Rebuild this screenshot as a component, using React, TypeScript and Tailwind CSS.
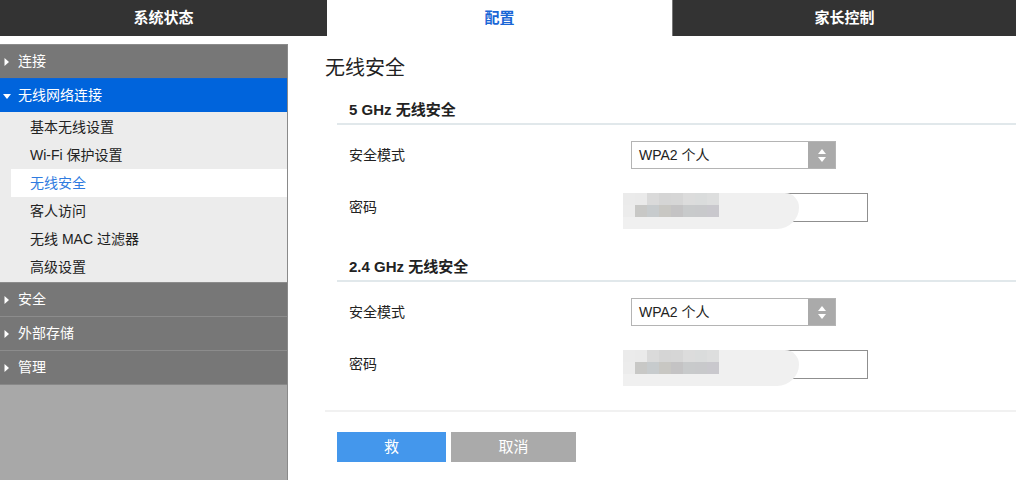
import { useState } from 'react';

const font = { fontFamily: '"Liberation Sans", "Noto Sans CJK SC", sans-serif' };

const tabs = [
  { label: '系统状态', width: 'w-[327px]' },
  { label: '配置', width: 'w-[345px]' },
  { label: '家长控制', width: 'flex-1' },
];

const wirelessItems = ['基本无线设置', 'Wi-Fi 保护设置', '无线安全', '客人访问', '无线 MAC 过滤器', '高级设置'];

const mosaicTop = ['#ebebeb', '#eaeaea', '#dadada', '#d5d5d5', '#d6d6d6', '#dcdcdc', '#dadcdc', '#dddede'];
const mosaicMid = ['#ececec', '#c8c8c6', '#c7cbcd', '#c8c7c3', '#c4c3c4', '#c8cacb', '#c8c9cb', '#c9c8cd'];

const Caret = ({ open }: { open?: boolean }) => (
  <svg width="8" height="8" viewBox="0 0 8 8" className="shrink-0">
    {open ? <path d="M0 2h8L4 7z" fill="#fff" /> : <path d="M1.5 0v8L6 4z" fill="#fff" />}
  </svg>
);

const SideHeader = ({ label, open, active }: { label: string; open?: boolean; active?: boolean }) => (
  <div
    className={`flex h-[34px] items-center gap-[7px] border-t pl-[3px] text-[14px] text-white ${
      active ? 'border-[#0a64d8] bg-[#0064dc]' : 'border-[#8c8c8c] bg-[#777777]'
    }`}
  >
    <Caret open={open} />
    <span>{label}</span>
  </div>
);

const Select = ({ value }: { value: string }) => (
  <div className="flex h-[28px] w-[205px] border border-[#b4b4b4] bg-white">
    <span className="flex flex-1 items-center pl-[7px] text-[14px] text-[#222]">{value}</span>
    <span className="flex w-[27px] flex-col items-center justify-center gap-[3px] bg-[#aaaaaa]">
      <svg width="8" height="5" viewBox="0 0 8 5">
        <path d="M0 5h8L4 0z" fill="#fff" />
      </svg>
      <svg width="8" height="5" viewBox="0 0 8 5">
        <path d="M0 0h8L4 5z" fill="#fff" />
      </svg>
    </span>
  </div>
);

// the password is hidden under a pixelated smudge in the screenshot
const MaskedInput = () => (
  <div className="relative h-[29px] w-[237px] border border-[#8f8f8f] bg-white">
    <div className="absolute top-[-1px] left-[-9px] h-[36px] w-[176px] rounded-r-[26px] rounded-br-[40px] bg-[#f0f0f0]">
      <div className="flex h-[12px]">
        {mosaicTop.map((c, i) => (
          <span key={i} className="h-full w-[12px]" style={{ background: c }} />
        ))}
      </div>
      <div className="flex h-[12px]">
        {mosaicMid.map((c, i) => (
          <span key={i} className="h-full w-[12px]" style={{ background: c }} />
        ))}
      </div>
    </div>
  </div>
);

const Row = ({ label, children }: { label: string; children: React.ReactNode }) => (
  <div className="flex h-[52px] items-center pl-[12px]">
    <span className="w-[282px] text-[14px] text-[#222]">{label}</span>
    {children}
  </div>
);

const Section = ({ title, first }: { title: string; first?: boolean }) => (
  <div className={first ? 'mt-[14px]' : 'mt-[20px]'}>
    <div className="h-[29px] border-b-2 border-[#e1e8eb] pl-[12px] text-[15px] leading-[28px] font-bold text-[#222]">
      {title}
    </div>
    <div className="mt-[4px]">
      <Row label="安全模式">
        <Select value="WPA2 个人" />
      </Row>
      <Row label="密码">
        <MaskedInput />
      </Row>
    </div>
  </div>
);

export default function App() {
  const [tab] = useState(1);

  return (
    <div className="flex h-[480px] flex-col overflow-hidden bg-white" style={font}>
      <nav className="flex h-[36px]">
        {tabs.map((t, i) => (
          <div
            key={t.label}
            className={`flex ${t.width} items-center justify-center text-[15px] font-bold ${
              i === tab ? 'bg-white text-[#1a66d6]' : 'bg-[#333333] text-white'
            } ${i === 2 ? 'border-l border-[#777]' : ''}`}
          >
            {t.label}
          </div>
        ))}
      </nav>

      <div className="flex flex-1 pt-2">
        <aside className="flex w-[288px] flex-col border-r border-[#8a8a8a] bg-[#a8a8a8]">
          <SideHeader label="连接" />
          <SideHeader label="无线网络连接" open active />
          <ul className="bg-[#ececec] py-px">
            {wirelessItems.map((item) => (
              <li
                key={item}
                className={`flex h-[28px] items-center text-[14px] ${
                  item === '无线安全' ? 'ml-[11px] bg-white pl-[19px] text-[#2f7be0]' : 'pl-[30px] text-[#222]'
                }`}
              >
                {item}
              </li>
            ))}
          </ul>
          <SideHeader label="安全" />
          <SideHeader label="外部存储" />
          <SideHeader label="管理" />
          <div className="border-t border-[#888]" />
        </aside>

        <main className="flex-1 pt-[10px] pl-[37px]">
          <h1 className="h-[28px] text-[20px] leading-[28px] text-[#222]">无线安全</h1>
          <div className="ml-[12px]">
            <Section title="5 GHz 无线安全" first />
            <Section title="2.4 GHz 无线安全" />
          </div>
          <div className="mt-[20px] border-t-2 border-[#f1f1f1]" />
          <div className="mt-[20px] ml-[12px] flex gap-[5px]">
            <button className="h-[30px] w-[109px] bg-[#4497ec] text-[15px] text-white">救</button>
            <button className="h-[30px] w-[125px] bg-[#aaaaaa] text-[15px] text-white">取消</button>
          </div>
        </main>
      </div>
    </div>
  );
}
